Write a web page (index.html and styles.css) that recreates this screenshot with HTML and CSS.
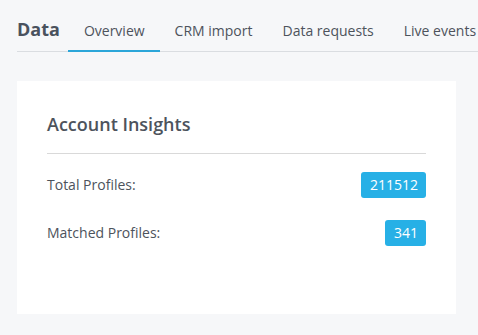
FILE: index.html
```html
<!DOCTYPE html>
<html lang="en">
<head>
<meta charset="utf-8">
<title>Data</title>
<link rel="stylesheet" href="styles.css">
</head>
<body>
<header class="topbar">
  <h1 class="title">Data</h1>
  <nav class="tabs">
    <a class="tab active">Overview</a>
    <a class="tab">CRM import</a>
    <a class="tab">Data requests</a>
    <a class="tab">Live events</a>
  </nav>
</header>
<section class="card">
  <h2 class="card-title">Account Insights</h2>
  <hr class="divider">
  <div class="row">
    <span class="label">Total Profiles:</span>
    <span class="badge">211512</span>
  </div>
  <div class="row">
    <span class="label">Matched Profiles:</span>
    <span class="badge">341</span>
  </div>
</section>
</body>
</html>
```

FILE: styles.css
```css
html, body {
  margin: 0;
  padding: 0;
  overflow: hidden;
}
body {
  background: #f6f7f9;
  font-family: "Open Sans", "Liberation Sans", sans-serif;
  color: #4d535c;
  width: 478px;
  height: 335px;
}
.topbar {
  display: flex;
  align-items: baseline;
  margin-left: 17px;
  padding-top: 8px;
  border-bottom: 1px solid #dadde1;
  white-space: nowrap;
  overflow: visible;
}
.title {
  margin: 0 8px 0 0;
  font-size: 18px;
  line-height: 24px;
  font-weight: 700;
  color: #4a525e;
  flex-shrink: 0;
}
.tabs {
  display: flex;
  flex-shrink: 0;
}
.tab {
  display: block;
  padding: 13px 15px 9px 16px;
  font-size: 14px;
  line-height: 20px;
  color: #4d535c;
  border-bottom: 2px solid transparent;
  margin-bottom: -1px;
  flex-shrink: 0;
}
.tab + .tab {
  padding-left: 15px;
}
.tab.active {
  border-bottom-color: #2ba6d9;
}
.card {
  margin: 29px 22px 0 17px;
  background: #ffffff;
  padding: 31px 30px 68px 30px;
}
.card-title {
  margin: 0;
  font-size: 18px;
  line-height: 24px;
  font-weight: 600;
  color: #4d535c;
}
.divider {
  margin: 17px 0 18px 0;
  border: 0;
  border-top: 1px solid #d9d9d9;
  height: 0;
}
.row {
  display: flex;
  justify-content: space-between;
  align-items: center;
  height: 26px;
}
.row + .row {
  margin-top: 22px;
}
.label {
  font-size: 14px;
  line-height: 26px;
}
.badge {
  background: #27b0e6;
  color: #ffffff;
  font-size: 14px;
  line-height: 18px;
  padding: 4px 8px 4px 9px;
  border-radius: 3px;
}
```
